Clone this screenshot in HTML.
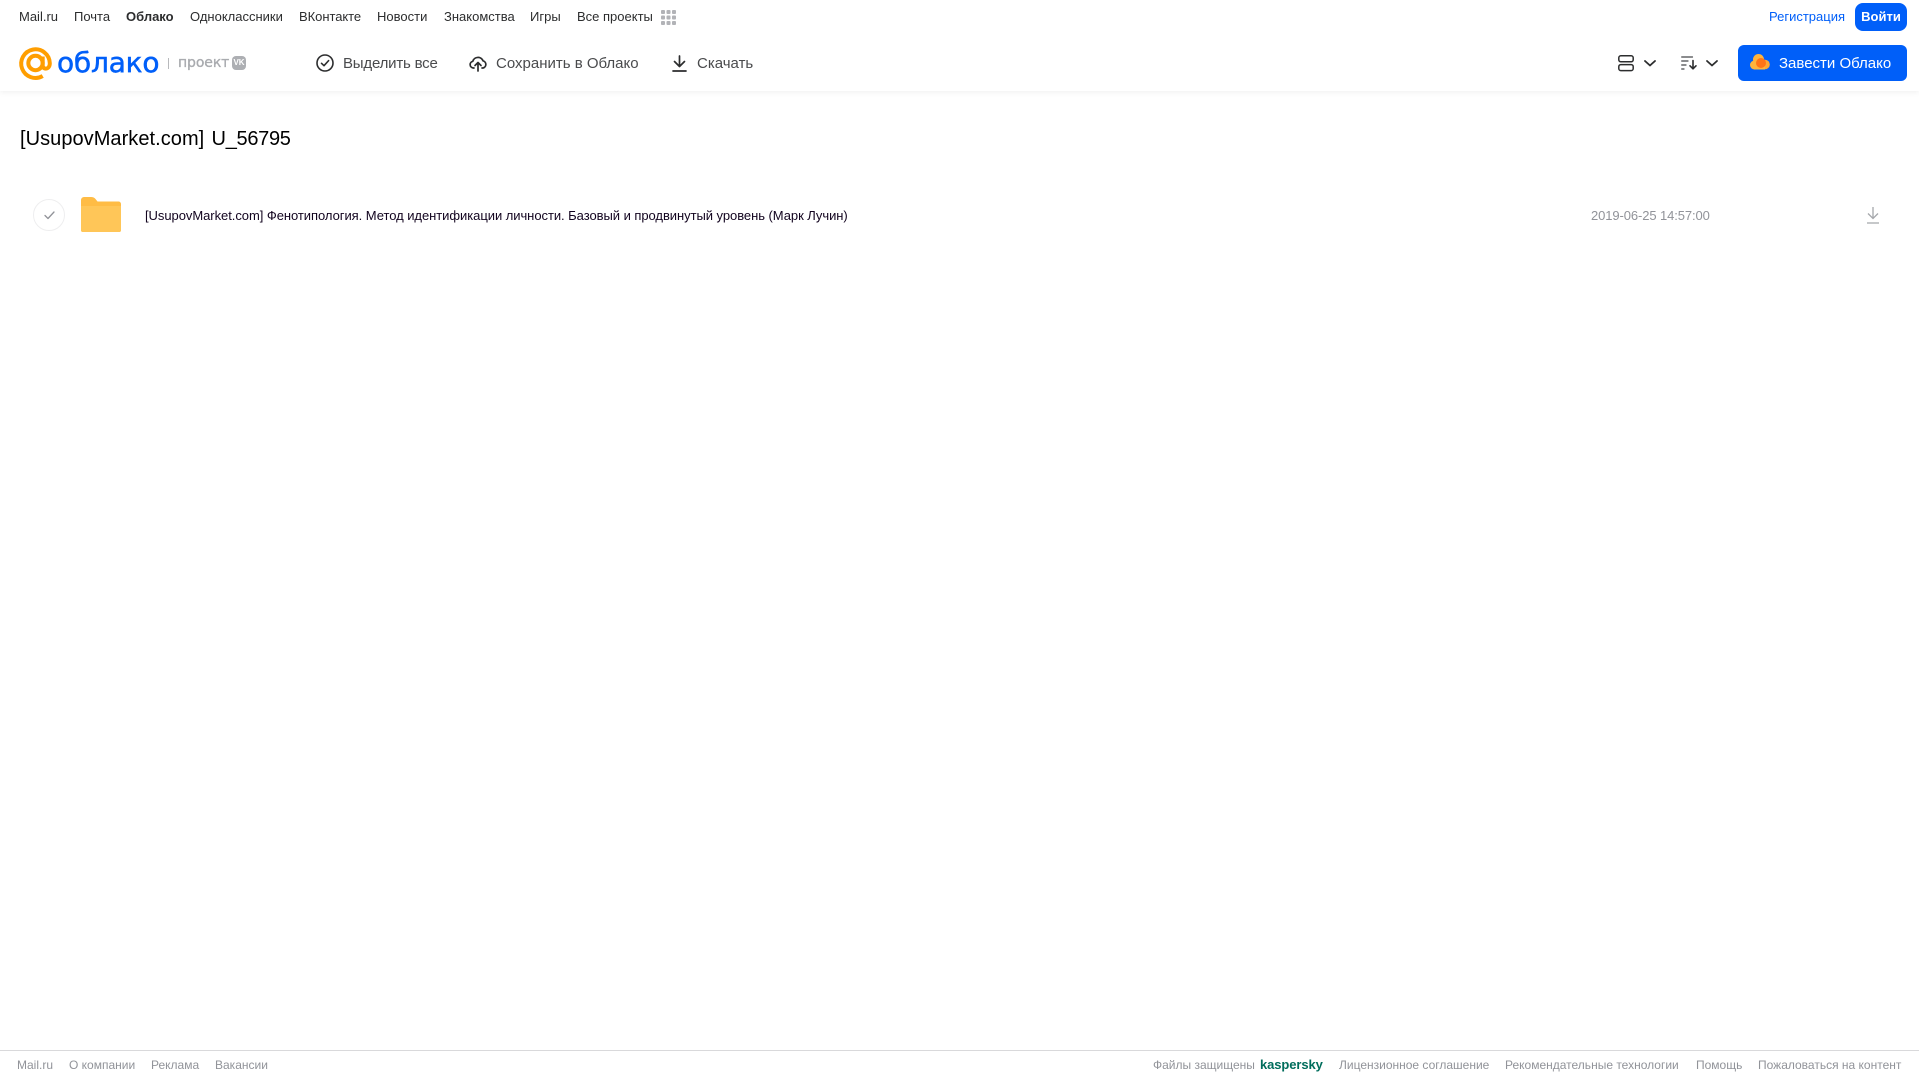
<!DOCTYPE html>
<html lang="ru"><head><meta charset="utf-8"><title>Облако</title>
<style>
html,body{margin:0;padding:0;background:#fff;width:1919px;height:1079px;overflow:hidden}
body{position:relative;font-family:"Liberation Sans",sans-serif}
.t{position:absolute;white-space:nowrap;line-height:20px;height:20px}
.n{font-size:13px;color:#2c2d2e;top:7px}
.a{font-size:15px;color:#4a4b4d;top:54px}
.f{font-size:12px;color:#919399;top:1055px}
svg{position:absolute;overflow:visible}
</style></head><body>
<div style="position:absolute;left:0;top:0;width:1919px;height:91px;background:#fff;box-shadow:0 1px 6px rgba(0,0,0,.07)"></div>

<div class="t n" style="left:19px">Mail.ru</div>
<div class="t n" style="left:74px">Почта</div>
<div class="t n" style="left:126px;font-weight:bold">Облако</div>
<div class="t n" style="left:190px">Одноклассники</div>
<div class="t n" style="left:299px;letter-spacing:-.05px">ВКонтакте</div>
<div class="t n" style="left:377px">Новости</div>
<div class="t n" style="left:444px">Знакомства</div>
<div class="t n" style="left:530px">Игры</div>
<div class="t n" style="left:577px">Все проекты</div>
<svg style="left:661px;top:10px" width="15" height="15" fill="#b2b3b7"><rect width="4" height="4" rx="1"/><rect x="5.5" width="4" height="4" rx="1"/><rect x="11" width="4" height="4" rx="1"/><rect y="5.5" width="4" height="4" rx="1"/><rect x="5.5" y="5.5" width="4" height="4" rx="1"/><rect x="11" y="5.5" width="4" height="4" rx="1"/><rect y="11" width="4" height="4" rx="1"/><rect x="5.5" y="11" width="4" height="4" rx="1"/><rect x="11" y="11" width="4" height="4" rx="1"/></svg>

<div class="t" style="left:1769px;top:7px;font-size:13px;color:#005ff9">Регистрация</div>
<div style="position:absolute;left:1855px;top:3px;width:52px;height:28px;border-radius:8px;background:#005ff9;color:#fff;font-size:13px;font-weight:bold;text-align:center;line-height:28px">Войти</div>

<!-- logo -->
<svg style="left:19px;top:47px" width="33" height="33" viewBox="0 0 33 33" fill="none" stroke="#ff9e00" stroke-width="4"><circle cx="16.5" cy="16" r="7.2"/><path d="M23.7 9.5V18.5C23.7 23 30.8 23 30.8 16.2A14.3 14.3 0 1 0 23.7 29"/></svg>
<div class="t" style="left:57px;top:46px;height:34px;line-height:34px;font-family:'DejaVu Sans',sans-serif;font-size:28px;letter-spacing:-.2px;color:#005ff9;-webkit-text-stroke:.5px #005ff9">облако</div>
<div style="position:absolute;left:168px;top:58px;width:1px;height:11px;background:#b8b9bc"></div>
<div class="t" style="left:178px;top:53px;font-family:'DejaVu Sans',sans-serif;font-size:14px;letter-spacing:-.1px;color:#a9abaf;-webkit-text-stroke:.35px #a9abaf">проект</div>
<div style="position:absolute;left:232px;top:56px;width:14px;height:14px;border-radius:4px;background:#adafb3;color:#fff;font-size:8px;font-weight:bold;line-height:14px;text-align:center">VK</div>

<!-- toolbar -->
<svg style="left:316px;top:54px" width="18" height="18" fill="none" stroke="#2c2d2e" stroke-width="1.6"><circle cx="9" cy="9" r="8"/><path d="M5.5 9.3L8 11.7L12.6 6.6" stroke-linecap="round" stroke-linejoin="round"/></svg>
<div class="t a" style="left:343px;letter-spacing:-.2px">Выделить все</div>
<svg style="left:469px;top:54px" width="18" height="18" fill="none" stroke="#2c2d2e" stroke-width="1.7" stroke-linecap="round" stroke-linejoin="round"><path d="M5 14H4.200A3.400 3.400 0 0 1 3.800 7.300A5.400 5.400 0 0 1 14 6.800A3.700 3.700 0 0 1 14 14H13"/><path d="M9 17V9M6 11.500L9 8.500L12 11.500"/></svg>
<div class="t a" style="left:496px">Сохранить в Облако</div>
<svg style="left:672px;top:55px" width="15" height="17" fill="none" stroke="#2c2d2e" stroke-width="1.7" stroke-linecap="round" stroke-linejoin="round"><path d="M7.500 1V11M2.500 6.500L7.500 11.500L12.500 6.500M1 16H14"/></svg>
<div class="t a" style="left:697px">Скачать</div>

<!-- right tools -->
<svg style="left:1618px;top:55px" width="17" height="17" fill="none" stroke="#2c2d2e" stroke-width="1.5"><rect x=".8" y=".8" width="14.4" height="6" rx="2"/><rect x=".8" y="9.6" width="14.4" height="6" rx="2"/></svg>
<svg style="left:1644px;top:60px" width="12" height="7" fill="none" stroke="#2c2d2e" stroke-width="1.8" stroke-linecap="round" stroke-linejoin="round"><path d="M1 1L6 5.500L11 1"/></svg>
<svg style="left:1681px;top:56px" width="16" height="14" fill="none" stroke="#46474a" stroke-width="1.2" stroke-linecap="round" stroke-linejoin="round"><path d="M.7 1H11.500M.7 5H7M.7 9H5M.7 13H3"/><path d="M12 4.500V12.500M9 9.800L12 12.800L15 9.800" stroke="#2c2d2e" stroke-width="1.6"/></svg>
<svg style="left:1706px;top:60px" width="12" height="7" fill="none" stroke="#2c2d2e" stroke-width="1.8" stroke-linecap="round" stroke-linejoin="round"><path d="M1 1L6 5.500L11 1"/></svg>
<div style="position:absolute;left:1738px;top:45px;width:169px;height:36px;border-radius:6px;background:#005ff9"></div>
<svg style="left:1750px;top:54px" width="20" height="16"><circle cx="4.500" cy="11" r="4.500" fill="#ffb43c"/><circle cx="8.500" cy="5.500" r="5.500" fill="#ffb43c"/><circle cx="15" cy="10.500" r="4.800" fill="#ffa733"/><rect x="4" y="9" width="11" height="6.500" fill="#ffb43c"/><circle cx="11" cy="9" r="5" fill="#ff7417"/></svg>
<div class="t" style="left:1779px;top:53px;font-size:15px;color:#fff;line-height:22px">Завести Облако</div>

<!-- title -->
<div class="t" style="left:20px;top:126px;height:26px;line-height:26px;font-size:20px;color:#000"><span style="letter-spacing:.05px">[UsupovMarket.com]</span><span style="margin-left:2px;letter-spacing:-.3px"> U_56795</span></div>

<!-- row -->
<div style="position:absolute;left:33px;top:199px;width:30px;height:30px;border:1px solid #eeeeef;border-radius:50%"></div>
<svg style="left:44px;top:211px" width="11" height="9" fill="none" stroke="#919399" stroke-width="1.3" stroke-linecap="round" stroke-linejoin="round"><path d="M1 4.500L4 7.500L10 1"/></svg>
<svg style="left:81px;top:197px" width="40" height="35"><path d="M0 3A3 3 0 0 1 3 0H10Q13 0 14.500 2L16.500 4.500H37.500A2.500 2.500 0 0 1 40 7V33A2 2 0 0 1 38 35H2A2 2 0 0 1 0 33Z" fill="#ffbc45"/><path d="M0 9H40V33A2 2 0 0 1 38 35H2A2 2 0 0 1 0 33Z" fill="#ffc658"/></svg>
<div class="t" style="left:145px;top:206px;font-size:13px;letter-spacing:-.05px;color:#12041f">[UsupovMarket.com] Фенотипология. Метод идентификации личности. Базовый и продвинутый уровень (Марк Лучин)</div>
<div class="t" style="left:1591px;top:206px;font-size:13px;letter-spacing:-.1px;color:#919399">2019-06-25 14:57:00</div>
<svg style="left:1866px;top:207px" width="14" height="17" fill="none" stroke="#a5a7ab" stroke-width="1.3"><path d="M7 0V11M2 6.500L7 11.500L12 6.500M1 16H13"/></svg>

<!-- footer -->
<div style="position:absolute;left:0;top:1050px;width:1919px;height:1px;background:#d9d9db"></div>
<div class="t f" style="left:17px">Mail.ru</div>
<div class="t f" style="left:69px">О компании</div>
<div class="t f" style="left:151px">Реклама</div>
<div class="t f" style="left:215px">Вакансии</div>
<div class="t f" style="left:1153px">Файлы защищены</div>
<div class="t" style="left:1260px;top:1055px;font-size:13px;font-weight:bold;letter-spacing:-.1px;color:#006d5c">kaspersky</div>
<div class="t f" style="left:1339px">Лицензионное соглашение</div>
<div class="t f" style="left:1505px">Рекомендательные технологии</div>
<div class="t f" style="left:1696px">Помощь</div>
<div class="t f" style="left:1758px">Пожаловаться на контент</div>
</body></html>
